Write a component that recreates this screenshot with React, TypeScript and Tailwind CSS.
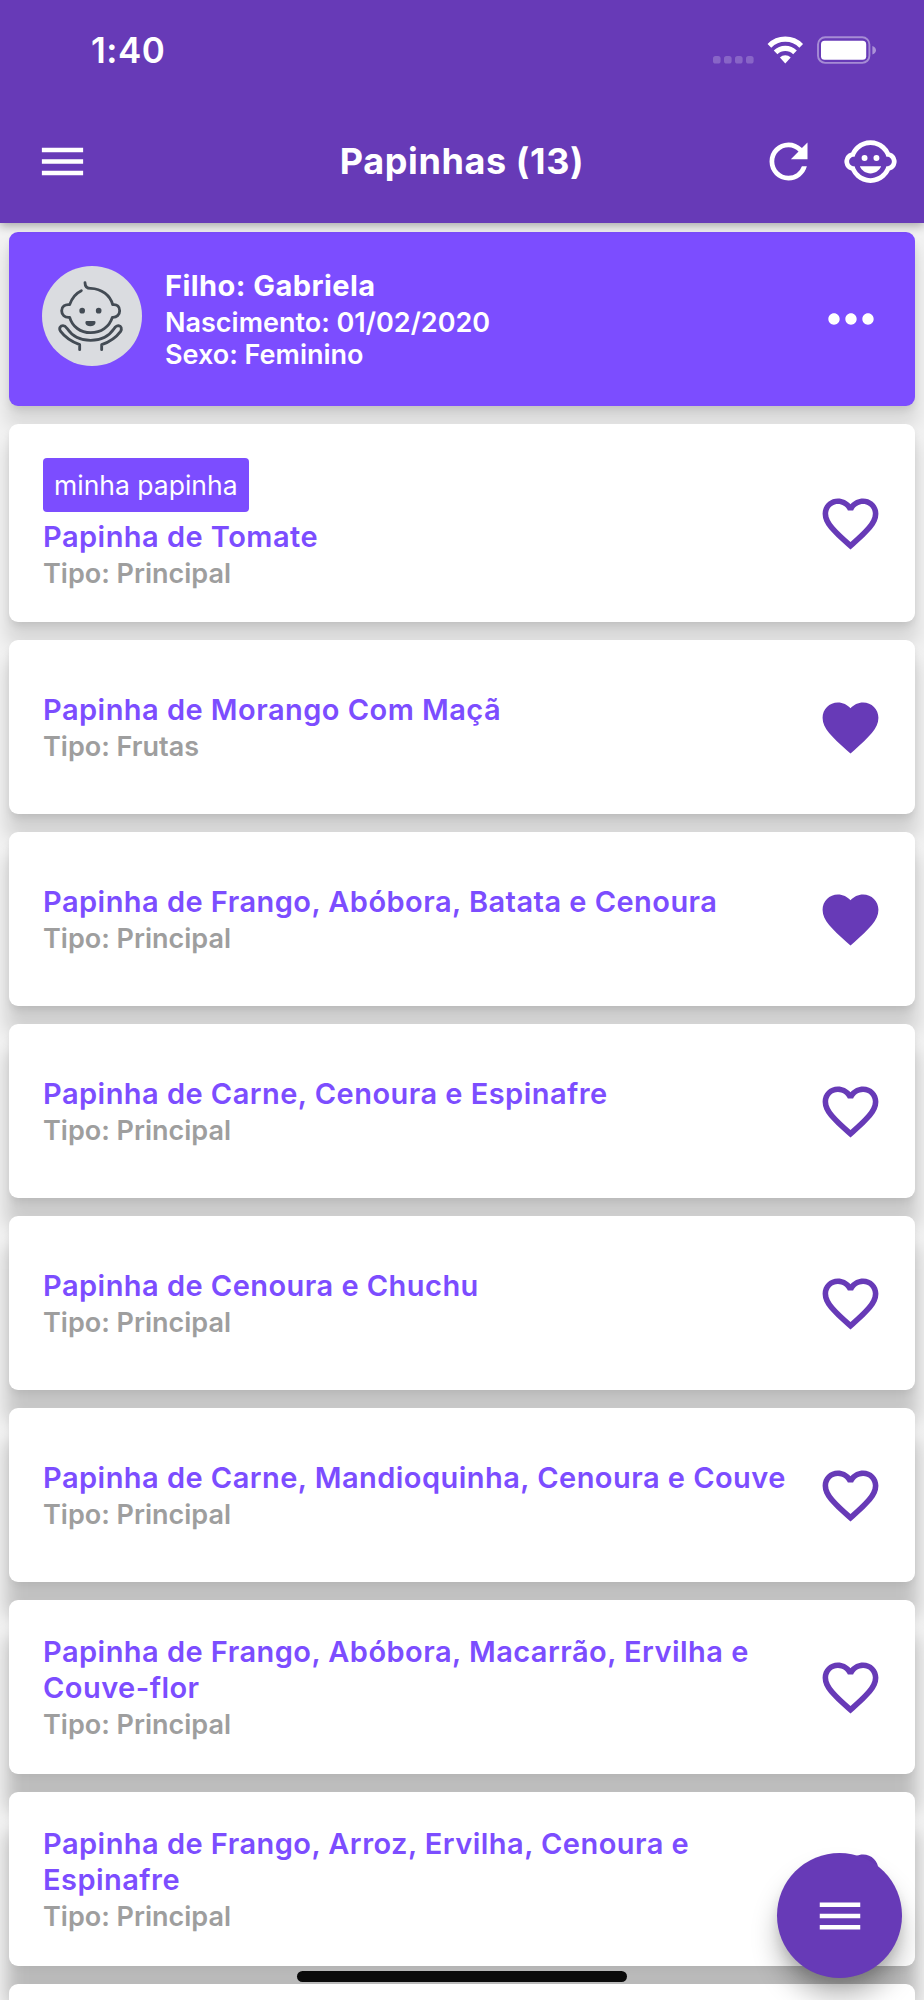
import React from 'react';
import clsx from 'clsx';
import { MdChildCare, MdFavorite, MdFavoriteBorder, MdMenu, MdMoreHoriz, MdRefresh } from 'react-icons/md';

type Recipe = {
    name: string;
    type: string;
    favorite?: boolean;
    mine?: boolean;
    shadow: string;
};

const RECIPES: Recipe[] = [
    {
        name: 'Papinha de Tomate',
        type: 'Principal',
        mine: true,
        shadow: 'shadow-[0_5px_9px_-2px_rgba(0,0,0,0.12),0_20px_18px_3px_rgba(0,0,0,0.11)]',
    },
    {
        name: 'Papinha de Morango Com Maçã',
        type: 'Frutas',
        favorite: true,
        shadow: 'shadow-[0_5px_9px_-2px_rgba(0,0,0,0.12),0_22px_18px_3px_rgba(0,0,0,0.13)]',
    },
    {
        name: 'Papinha de Frango, Abóbora, Batata e Cenoura',
        type: 'Principal',
        favorite: true,
        shadow: 'shadow-[0_5px_9px_-2px_rgba(0,0,0,0.12),0_25px_18px_3px_rgba(0,0,0,0.14)]',
    },
    {
        name: 'Papinha de Carne, Cenoura e Espinafre',
        type: 'Principal',
        shadow: 'shadow-[0_5px_9px_-2px_rgba(0,0,0,0.1),0_28px_18px_3px_rgba(0,0,0,0.16)]',
    },
    {
        name: 'Papinha de Cenoura e Chuchu',
        type: 'Principal',
        shadow: 'shadow-[0_5px_9px_-2px_rgba(0,0,0,0.09),0_31px_18px_3px_rgba(0,0,0,0.18)]',
    },
    {
        name: 'Papinha de Carne, Mandioquinha, Cenoura e Couve',
        type: 'Principal',
        shadow: 'shadow-[0_5px_9px_-2px_rgba(0,0,0,0.07),0_34px_18px_3px_rgba(0,0,0,0.2)]',
    },
    {
        name: 'Papinha de Frango, Abóbora, Macarrão, Ervilha e Couve-flor',
        type: 'Principal',
        shadow: 'shadow-[0_5px_9px_-2px_rgba(0,0,0,0.05),0_37px_18px_2px_rgba(0,0,0,0.22)]',
    },
    {
        name: 'Papinha de Frango, Arroz, Ervilha, Cenoura e Espinafre',
        type: 'Principal',
        shadow: 'shadow-[0_5px_9px_-2px_rgba(0,0,0,0.04),0_40px_18px_2px_rgba(0,0,0,0.23)]',
    },
];

function StatusBar() {
    return (
        <div className="flex h-[100px] items-center justify-between pl-[91px] pr-[46px]">
            <span className="text-[35px] font-semibold leading-none tracking-[0.5px]">1:40</span>
            <svg viewBox="0 0 166 30" className="h-[30px] w-[166px]" fill="currentColor">
                <g opacity="0.22">
                    <rect x="1" y="21" width="7.6" height="7.6" rx="2.6" />
                    <rect x="12" y="21" width="7.6" height="7.6" rx="2.6" />
                    <rect x="23" y="21" width="7.6" height="7.6" rx="2.6" />
                    <rect x="34" y="21" width="7.6" height="7.6" rx="2.6" />
                </g>
                <g fill="none" stroke="currentColor" strokeWidth="5.2">
                    <path d="M57.4 10.8 A22.5 22.5 0 0 1 89.2 10.8" />
                    <path d="M63.6 17.3 A13.8 13.8 0 0 1 83 17.3" />
                </g>
                <path d="M73.3 28.4 L67.9 22.6 A7.6 7.6 0 0 1 78.7 22.6 Z" />
                <rect x="106" y="2.3" width="51.4" height="25.6" rx="7.2" fill="none" stroke="currentColor" strokeWidth="1.9" opacity="0.42" />
                <rect x="109" y="5.8" width="45.2" height="19" rx="3.6" />
                <path d="M160.4 11 Q164 12.4 164 15.2 Q164 18 160.4 19.6 Z" opacity="0.45" />
            </svg>
        </div>
    );
}

function Header() {
    return (
        <header className="relative z-10 h-[223px] shrink-0 bg-[#673ab7] text-white shadow-[0_3px_9px_rgba(0,0,0,0.3)]">
            <StatusBar />
            <div className="grid h-[122px] grid-cols-[1fr_auto_1fr] items-center pl-[35px] pr-[25px]">
                <button className="justify-self-start">
                    <MdMenu className="size-[55px]" />
                </button>
                <h1 className="-ml-[10px] text-[36px] font-bold leading-none tracking-[0.6px]">Papinhas (13)</h1>
                <div className="flex gap-[25px] justify-self-end">
                    <button>
                        <MdRefresh className="size-[57px]" />
                    </button>
                    <button>
                        <MdChildCare className="size-[57px]" />
                    </button>
                </div>
            </div>
        </header>
    );
}

function BabyAvatar() {
    return (
        <div className="size-[100px] shrink-0 rounded-full bg-[#dadce0]">
            <svg viewBox="38 32 300 300" className="size-full" fill="none" stroke="#434b54" strokeWidth="8.5" strokeLinecap="round" strokeLinejoin="round">
                <path d="M167 82C167 94 172 99 184 99C217 100 243 120 250 148C264 146 271 155 271 166C271 178 262 187 249 186C240 215 215 232 184 232C153 232 129 214 121 186C106 188 97 178 97 166C97 154 107 146 121 148C127 130 139 114 156 106" />
                <path d="M151 283V268C125 258 105 243 94 228C87 218 94 211 101 211C107 211 110 215 114 220C130 244 155 255 184 255C213 255 238 244 254 220C258 214 263 211 268 211C276 212 278 220 274 228C262 244 243 259 217 268V283" />
                <g fill="#434b54" stroke="none">
                    <circle cx="158.500" cy="166" r="8.500" />
                    <circle cx="208" cy="166" r="8.500" />
                    <path d="M172 197H195C202 197 199 213 183 213C167 213 165 197 172 197Z" />
                </g>
            </svg>
        </div>
    );
}

function ChildCard() {
    return (
        <section className="flex h-[174px] shrink-0 items-center rounded-[9px] bg-[#7c4dff] pl-[33px] pr-[30px] text-white shadow-[0_5px_9px_-2px_rgba(0,0,0,0.12),0_18px_18px_3px_rgba(0,0,0,0.1)]">
            <div className="-mt-[7px] flex flex-1 items-center gap-[23px]">
                <BabyAvatar />
                <div className="mt-[6px] font-semibold">
                    <p className="mb-[3px] text-[29px] font-bold leading-[37px] tracking-[0.45px]">Filho: Gabriela</p>
                    <p className="text-[27px] leading-[31.500px]">Nascimento: 01/02/2020</p>
                    <p className="text-[27px] leading-[31.500px]">Sexo: Feminino</p>
                </div>
            </div>
            <MdMoreHoriz className="size-[68px]" />
        </section>
    );
}

function RecipeCard({ recipe }: { recipe: Recipe }) {
    const Heart = recipe.favorite ? MdFavorite : MdFavoriteBorder;

    return (
        <li
            className={clsx(
                'flex shrink-0 items-center rounded-[9px] bg-white pl-[34px] pr-[31px]',
                recipe.mine ? 'h-[198px]' : 'h-[174px]',
                recipe.shadow
            )}
        >
            <div className="flex flex-1 flex-col items-start pr-4 pt-[3px]">
                {recipe.mine && (
                    <span className="mb-[7px] h-[54px] rounded-[4px] bg-[#7c4dff] px-[11px] text-[26.500px] leading-[54px] text-white">
                        minha papinha
                    </span>
                )}
                <h2 className="text-[29px] font-semibold leading-9 tracking-[0.46px] text-[#7c4dff]">{recipe.name}</h2>
                <p className="mt-px text-[27px] font-semibold leading-9 text-[#9e9e9e]">Tipo: {recipe.type}</p>
            </div>
            <Heart className="size-[67px] shrink-0 text-[#673ab7]" />
        </li>
    );
}

export default function App() {
    return (
        <div className="relative flex h-[2000px] w-[924px] flex-col overflow-hidden bg-[#f2f2f2] font-['Inter','Liberation_Sans',sans-serif]">
            <Header />
            <main className="flex flex-col gap-[18px] px-[9px] pt-[9px]">
                <ChildCard />
                <ul className="flex flex-col gap-[18px]">
                    {RECIPES.map((recipe) => (
                        <RecipeCard key={recipe.name} recipe={recipe} />
                    ))}
                    <li className="h-[174px] shrink-0 rounded-[9px] bg-white" />
                </ul>
            </main>

            <button className="absolute bottom-[22px] right-[22px] flex size-[125px] items-center justify-center rounded-full bg-[#673ab7] text-white shadow-[0_8px_12px_-2px_rgba(0,0,0,0.12),0_20px_26px_0_rgba(0,0,0,0.26)]">
                <MdMenu className="size-[54px]" />
            </button>
            <div className="absolute bottom-[18px] left-[297px] h-[11px] w-[330px] rounded-full bg-[#0a0a0a]" />
        </div>
    );
}
